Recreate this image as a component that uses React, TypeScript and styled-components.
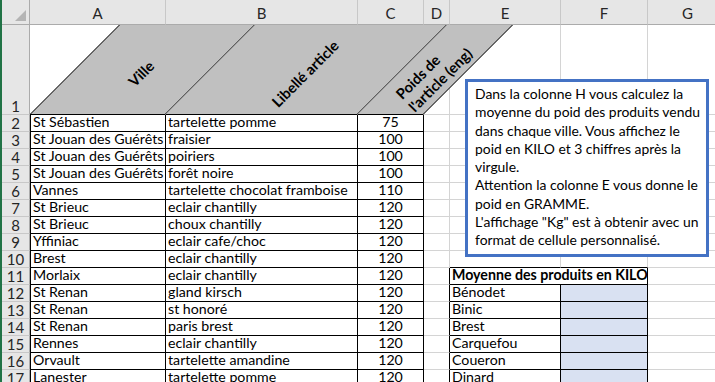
import React from 'react';
import styled, { createGlobalStyle } from 'styled-components';

const FONT = `Lato, "Open Sans", "Liberation Sans", sans-serif`;
const GRID = '#D4D4D4';
const BLACK = '#000000';
const HEAD_BG = '#E6E6E6';
const HEAD_LINE = '#ABABAB';

const GlobalStyle = createGlobalStyle`
  html, body { margin: 0; padding: 0; background: #fff; overflow: hidden; }
  body { font-family: ${FONT}; }
`;

const Page = styled.div`
  display: flex;
  width: 715px;
  height: 382px;
  overflow: hidden;
  background: #fff;
`;

const GreenBar = styled.div`
  flex: none;
  width: 2px;
  background: #217346;
`;

const Sheet = styled.div`
  position: relative;
  flex: none;
  display: grid;
  grid-template-columns: 28px 136px 192px 66px 26px 111px 87px 80px;
  grid-template-rows: 25px 90px repeat(16, 17px);
  font-family: ${FONT};
  font-size: 14.2px;
  color: #000;
`;

const Corner = styled.div`
  position: relative;
  background: ${HEAD_BG};
  border-right: 1px solid ${HEAD_LINE};
  border-bottom: 1px solid ${HEAD_LINE};
  &::after {
    content: '';
    position: absolute;
    right: 3px;
    bottom: 3px;
    width: 11px;
    height: 11px;
    background: #B4B4B4;
    clip-path: polygon(100% 0, 100% 100%, 0 100%);
  }
`;

const ColHead = styled.div`
  display: flex;
  align-items: center;
  justify-content: center;
  background: ${HEAD_BG};
  border-right: 1px solid #C8C8C8;
  border-bottom: 1px solid ${HEAD_LINE};
  font-size: 15px;
  color: #262626;
  padding-top: 1px;
`;

const RowHead = styled.div`
  display: flex;
  align-items: flex-end;
  justify-content: center;
  background: ${HEAD_BG};
  border-right: 1px solid ${HEAD_LINE};
  border-bottom: 1px solid #C8C8C8;
  font-size: 15px;
  line-height: 16px;
  color: #262626;
`;

type CellProps = {
  $r?: string;
  $b?: string;
  $l?: string;
  $align?: 'left' | 'center';
  $fill?: string;
  $bold?: boolean;
  $span?: number;
};

const Cell = styled.div<CellProps>`
  position: relative;
  display: flex;
  align-items: flex-end;
  justify-content: ${(p) => (p.$align === 'center' ? 'center' : 'flex-start')};
  grid-column: ${(p) => (p.$span ? `span ${p.$span}` : 'auto')};
  background: ${(p) => p.$fill || 'transparent'};
  border-right: 1px solid ${(p) => p.$r || GRID};
  border-bottom: 1px solid ${(p) => p.$b || GRID};
  border-left: ${(p) => (p.$l ? `1px solid ${p.$l}` : 'none')};
  padding: 0 2px 1px 2px;
  line-height: 16px;
  white-space: nowrap;
  font-weight: ${(p) => (p.$bold ? 700 : 400)};
`;

const Slant = styled.div<{ $first?: boolean }>`
  position: absolute;
  top: 0;
  bottom: 0;
  left: 0;
  right: -1px;
  z-index: 1;
  display: flex;
  align-items: center;
  justify-content: center;
  background: #C0C0C0;
  border-right: 1px solid ${BLACK};
  border-left: ${(p) => (p.$first ? `1px solid ${BLACK}` : 'none')};
  transform: skewX(-45deg);
  transform-origin: bottom left;
`;

const SlantLabel = styled.div<{ $left?: boolean }>`
  transform: translate(4px, 4px) skewX(45deg) rotate(-45deg);
  font-size: 14.67px;
  font-weight: 700;
  text-align: ${(p) => (p.$left ? 'left' : 'center')};
  white-space: nowrap;
  line-height: 18px;
`;

const Note = styled.div`
  position: absolute;
  left: 463px;
  top: 79px;
  width: 244px;
  height: 178px;
  box-sizing: border-box;
  z-index: 3;
  background: #fff;
  border: 3px solid #4472C4;
  padding: 3px 4px 0 7px;
  font-size: 13.9px;
  line-height: 18.3px;
  color: #000;
`;

const NoteLine = styled.div`
  white-space: nowrap;
`;

const cols = ['A', 'B', 'C', 'D', 'E', 'F', 'G'];

const data: [string, string, number][] = [
  ['St Sébastien', 'tartelette pomme', 75],
  ['St Jouan des Guérêts', 'fraisier', 100],
  ['St Jouan des Guérêts', 'poiriers', 100],
  ['St Jouan des Guérêts', 'forêt noire', 100],
  ['Vannes', 'tartelette chocolat framboise', 110],
  ['St Brieuc', 'eclair chantilly', 120],
  ['St Brieuc', 'choux chantilly', 120],
  ['Yffiniac', 'eclair cafe/choc', 120],
  ['Brest', 'eclair chantilly', 120],
  ['Morlaix', 'eclair chantilly', 120],
  ['St Renan', 'gland kirsch', 120],
  ['St Renan', 'st honoré', 120],
  ['St Renan', 'paris brest', 120],
  ['Rennes', 'eclair chantilly', 120],
  ['Orvault', 'tartelette amandine', 120],
  ['Lanester', 'tartelette pomme', 120],
];

const villes: Record<number, string> = {
  12: 'Bénodet',
  13: 'Binic',
  14: 'Brest',
  15: 'Carquefou',
  16: 'Coueron',
  17: 'Dinard',
};

const noteLines = [
  'Dans la colonne H vous calculez la',
  'moyenne du poid des produits vendu',
  'dans chaque ville. Vous affichez le',
  'poid en KILO et 3 chiffres après la',
  'virgule.',
  'Attention la colonne E vous donne le',
  'poid en GRAMME.',
  'L\'affichage "Kg" est à obtenir avec un',
  'format de cellule personnalisé.',
];

function DataRow({ row, ville, libelle, poids }: { row: number; ville: string; libelle: string; poids: number }) {
  const inTable = row >= 11;
  return (
    <>
      <RowHead>{row}</RowHead>
      <Cell $l={BLACK} $r={BLACK} $b={BLACK}>{ville}</Cell>
      <Cell $r={BLACK} $b={BLACK}>{libelle}</Cell>
      <Cell $r={BLACK} $b={BLACK} $align="center">{poids}</Cell>
      <Cell $r={inTable ? BLACK : GRID} />
      {row === 11 ? (
        <Cell $span={2} $r={BLACK} $b={BLACK} $bold>Moyenne des produits en KILO</Cell>
      ) : (
        <>
          <Cell $r={row >= 12 ? BLACK : GRID} $b={row >= 10 ? BLACK : GRID}>{villes[row] || ''}</Cell>
          <Cell
            $r={row >= 12 ? BLACK : GRID}
            $b={row >= 10 ? BLACK : GRID}
            $fill={row >= 12 ? '#D9E1F2' : undefined}
          />
        </>
      )}
      <Cell />
    </>
  );
}

export default function App() {
  return (
    <>
      <GlobalStyle />
      <Page>
        <GreenBar />
        <Sheet>
          <Corner />
          {cols.map((c) => (
            <ColHead key={c}>{c}</ColHead>
          ))}

          <RowHead>1</RowHead>
          <Cell $b={BLACK}>
            <Slant $first>
              <SlantLabel>Ville</SlantLabel>
            </Slant>
          </Cell>
          <Cell $b={BLACK}>
            <Slant>
              <SlantLabel>Libellé article</SlantLabel>
            </Slant>
          </Cell>
          <Cell $b={BLACK}>
            <Slant>
              <SlantLabel $left>
                Poids de
                <br />
                l'article (eng)
              </SlantLabel>
            </Slant>
          </Cell>
          <Cell />
          <Cell />
          <Cell />
          <Cell />

          {data.map(([v, l, p], i) => (
            <DataRow key={i} row={i + 2} ville={v} libelle={l} poids={p} />
          ))}

          <Note>
            {noteLines.map((t, i) => (
              <NoteLine key={i}>{t}</NoteLine>
            ))}
          </Note>
        </Sheet>
      </Page>
    </>
  );
}
